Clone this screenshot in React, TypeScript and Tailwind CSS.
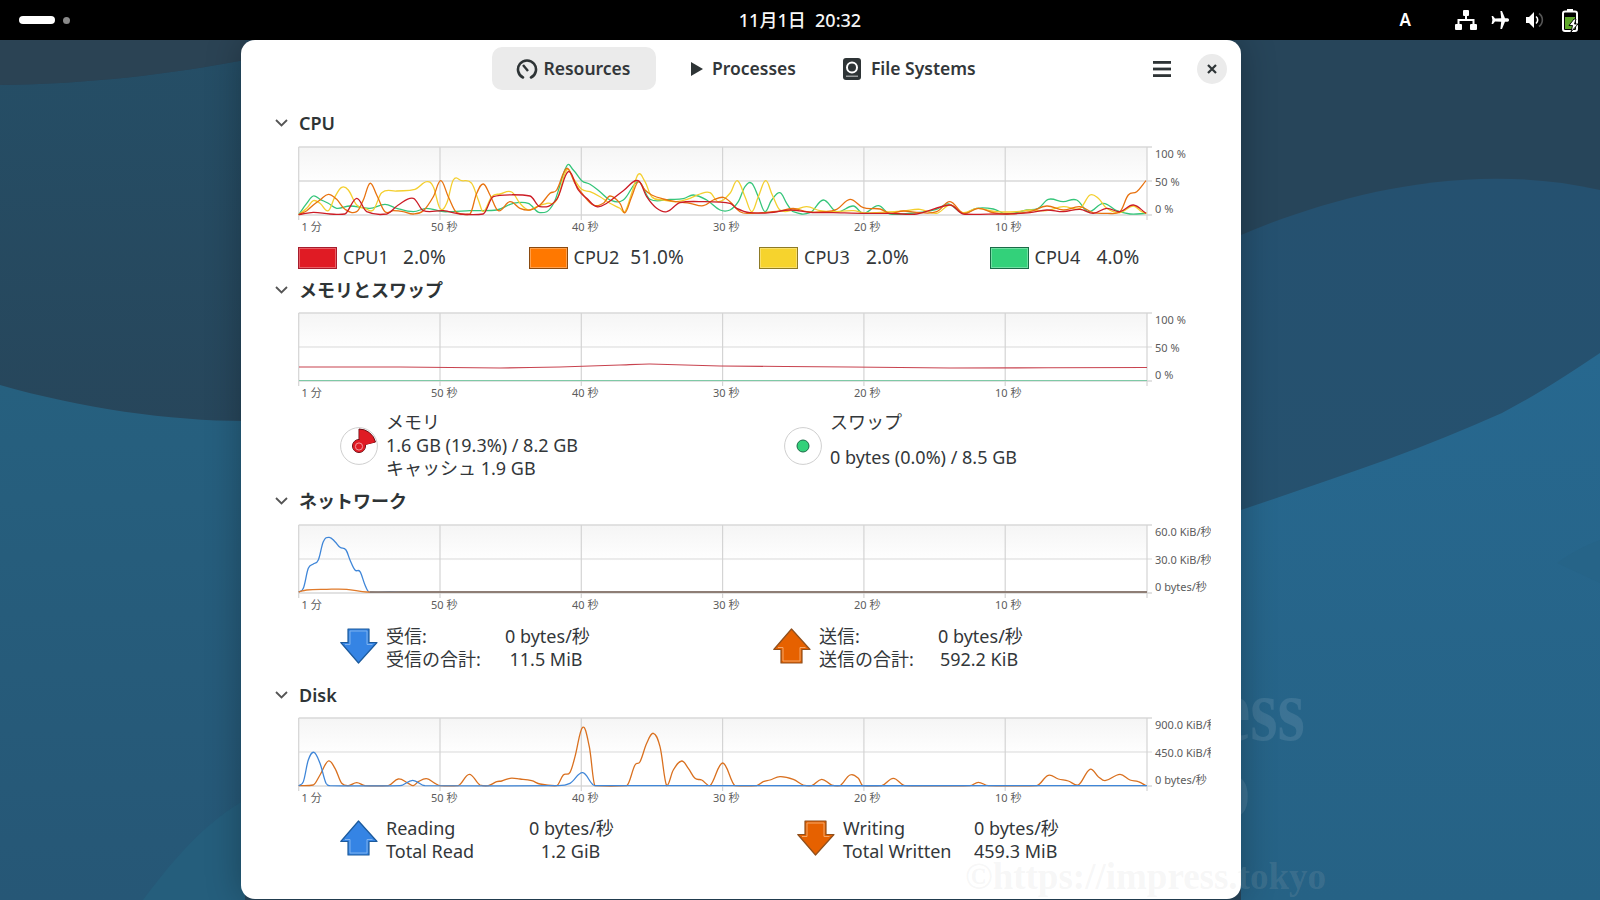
import React from "react";

type P = number[][];
const FONT = "font-['Noto_Sans','Noto_Sans_CJK_JP',sans-serif]";

const smooth = (pts: P, base: number) => {
  const slope = (i: number) => {
    const a = pts[Math.max(i - 1, 0)];
    const b = pts[Math.min(i + 1, pts.length - 1)];
    return (b[1] - a[1]) / Math.max(b[0] - a[0], 0.1);
  };
  let d = `M${pts[0][0].toFixed(1)} ${pts[0][1].toFixed(1)}`;
  for (let i = 0; i < pts.length - 1; i++) {
    const p1 = pts[i];
    const p2 = pts[i + 1];
    const h = Math.min((p2[0] - p1[0]) / 2.6, 7);
    const c1y = Math.min(base, p1[1] + slope(i) * h);
    const c2y = Math.min(base, p2[1] - slope(i + 1) * h);
    d += `C${(p1[0] + h).toFixed(1)} ${c1y.toFixed(1)} ${(p2[0] - h).toFixed(1)} ${c2y.toFixed(1)} ${p2[0].toFixed(1)} ${p2[1].toFixed(1)}`;
  }
  return d;
};

const zz = (bx: number, by: number, p: P): P => p.map(([x, y]) => [bx + x / 3, by + y / 3]);

const cpuYellow = [
  ...zz(270, 140, [[86,224],[110,205],[130,182],[150,190],[175,212],[195,170],[215,142],[235,150],[260,195],[285,205],[310,210],[335,158],[380,153],[435,148],[470,125],[490,140],[510,205],[530,190],[550,120],[575,122],[605,130],[625,180],[640,215],[665,170],[690,162],[725,156],[750,190],[775,210],[800,200],[830,190],[860,180],[890,90],[910,115],[935,148],[960,155],[990,170],[1020,190],[1050,205],[1065,215],[1085,160],[1105,103],[1125,125],[1145,170],[1180,180],[1220,185],[1260,175],[1290,162],[1320,158],[1345,185]]),
  ...zz(730, 140, [[0,160],[22,122],[45,170],[65,215],[85,170],[107,122],[127,165],[150,210],[190,210],[230,200],[270,212],[310,215],[370,212],[400,218],[440,218],[520,213],[570,208],[620,220],[660,195],[700,218],[740,205],[800,215],[860,215],[900,210],[950,212],[1000,200],[1050,205],[1080,165],[1105,175],[1130,205],[1170,218],[1210,198],[1235,215],[1250,220]]),
];
const cpuOrange = [
  ...zz(270, 140, [[86,224],[110,212],[130,195],[150,180],[175,163],[200,178],[225,208],[260,215],[280,180],[300,130],[320,165],[345,215],[370,212],[400,215],[430,222],[460,212],[490,170],[512,122],[535,170],[560,218],[600,222],[620,160],[640,132],[660,165],[685,212],[720,185],[750,205],[780,210],[810,195],[840,160],[860,150],[890,85],[915,130],[940,165],[970,195],[1000,190],[1020,168],[1050,190],[1065,218],[1085,170],[1105,125],[1125,150],[1145,165],[1180,177],[1220,185],[1260,190],[1300,197],[1330,180],[1360,172]]),
  ...zz(730, 140, [[0,185],[30,215],[60,220],[100,218],[150,213],[190,205],[230,215],[280,215],[320,208],[360,178],[400,203],[450,207],[480,220],[520,213],[570,218],[620,215],[660,185],[700,220],[745,205],[790,218],[830,222],[900,215],[950,198],[1000,210],[1050,200],[1090,218],[1130,220],[1170,215],[1195,165],[1220,155],[1248,122]]),
];
const cpuGreen = [
  ...zz(270, 140, [[86,224],[110,190],[130,168],[150,178],[175,190],[200,205],[240,198],[300,205],[345,193],[380,205],[430,215],[470,205],[520,215],[600,212],[680,210],[730,190],[775,190],[810,218],[850,192],[890,78],[910,90],[935,122],[960,133],[990,155],[1020,180],[1060,180],[1105,125],[1140,178],[1200,178],[1240,176],[1270,165],[1310,180],[1350,210]]),
  ...zz(730, 140, [[0,210],[25,185],[45,140],[65,130],[85,170],[105,215],[125,180],[150,158],[170,190],[190,215],[240,218],[280,180],[320,215],[370,198],[400,220],[445,197],[480,222],[560,218],[620,208],[655,192],[700,220],[740,205],[790,207],[830,222],[890,210],[925,205],[955,178],[1000,185],[1040,180],[1075,215],[1120,190],[1160,212],[1200,222],[1248,220]]),
];
const cpuRed = [
  ...zz(270, 140, [[86,224],[130,217],[180,222],[225,222],[260,175],[290,215],[350,222],[385,195],[430,175],[460,212],[520,212],[570,222],[640,222],[670,170],[780,168],[810,200],[860,178],[895,95],[925,150],[950,175],[980,200],[1010,190],[1060,152],[1105,122],[1130,170],[1160,205],[1190,215],[1230,188],[1300,185]]),
  ...zz(730, 140, [[0,190],[20,205],[60,218],[120,218],[180,210],[240,217],[310,218],[400,220],[480,220],[560,222],[660,195],[700,222],[800,222],[830,222],[900,218],[950,210],[1000,215],[1050,208],[1090,220],[1130,205],[1170,215],[1210,195],[1248,220]]),
];
const memRed: P = [[299,367],[400,367],[500,368],[560,367],[620,365],[650,364],[720,366],[850,367],[950,368],[1147,367.5]];
const memGreen: P = [[299,380.5],[1147,380.5]];
const netBlue = [
  ...zz(270, 500, [[86,276],[100,265],[115,205],[130,192],[145,180],[160,125],[178,112],[195,125],[210,142],[228,150],[240,180],[255,210],[270,215],[285,255],[297,276],[360,275],[400,276]]),
  [1147, 592],
];
const netOrange = [...zz(270, 500, [[86,276],[110,270],[170,268],[230,268],[290,276],[400,276]]), [1147, 592]];
const netGray: P = [[370, 592], [1147, 592]];
const diskBlue = [
  ...zz(270, 700, [[86,257],[100,245],[115,180],[132,157],[150,190],[168,250],[180,257],[390,257],[428,241],[465,257],[860,257],[900,250],[938,218],[975,257]]),
  [1147, 785.7],
];
const diskOrange = [
  ...zz(270, 700, [[86,257],[130,255],[150,225],[175,183],[195,205],[215,250],[235,257],[260,248],[285,257],[355,257],[385,237],[415,250],[430,257],[445,245],[470,236],[495,250],[510,257],[565,257],[598,223],[630,255],[655,257],[680,245],[695,243],[720,235],[750,237],[785,242],[810,252],[860,257],[880,225],[900,217],[915,170],[938,82],[958,140],[975,257],[1070,257],[1095,195],[1110,185],[1130,130],[1150,100],[1170,140],[1190,257],[1210,210],[1235,183],[1255,205],[1275,235],[1295,240],[1320,257],[1358,189],[1395,257]]),
  ...zz(740, 700, [[50,257],[70,245],[90,240],[120,230],[160,238],[190,255],[215,257],[245,238],[275,255],[300,257],[330,225],[355,235],[368,257],[425,257],[460,235],[495,257],[690,257],[715,247],[745,257],[890,257],[925,226],[955,237],[985,243],[1015,255],[1050,208],[1075,230],[1095,242],[1140,223],[1170,240],[1195,245],[1218,257]]),
];

const times = [
  { t: "1 分", x: 15.5 },
  { t: "50 秒", x: 145 },
  { t: "40 秒", x: 286 },
  { t: "30 秒", x: 427 },
  { t: "20 秒", x: 568 },
  { t: "10 秒", x: 709 },
];

function Chart({ id, top, series, labels, thin }: { id: string; top: number; series: { d: P; c: string; w?: number }[]; labels: string[]; thin?: boolean }) {
  const L = 12.7;
  const R = 861;
  const T = 7;
  const B = 75;
  const M = 41;
  const xs = [0, 1, 2, 3, 4, 5].map((i) => L + i * 141.3);
  return (
    <svg width={925} height={100} viewBox="0 0 925 100" className="block ml-[45px]">
      <defs>
        <linearGradient id={id} x1="0" y1="0" x2="0" y2="1">
          <stop offset="0" stopColor="#f5f5f5" />
          <stop offset="0.55" stopColor="#ffffff" />
        </linearGradient>
      </defs>
      <rect x={L} y={T} width={R - L} height={B - T} fill={`url(#${id})`} />
      {[T, M].map((y) => (
        <line key={y} x1={L} x2={R + 5} y1={y} y2={y} stroke="#d9d9d9" strokeWidth={y === M && thin ? 1 : 1.3} />
      ))}
      <line x1={L} x2={R + 5} y1={B} y2={B} stroke="#d9d9d9" strokeWidth={1.3} />
      {xs.map((x) => (
        <line key={x} x1={x} x2={x} y1={T} y2={B + 5} stroke="#d4d4d4" strokeWidth={1.2} />
      ))}
      <line x1={R} x2={R} y1={T} y2={B + 5} stroke="#d4d4d4" strokeWidth={1.2} />
      <g transform={`translate(-286,${-(top - 7)})`} fill="none" strokeLinejoin="round">
        {series.map((s, i) => (
          <path key={i} d={smooth(s.d, top + 68)} stroke={s.c} strokeWidth={s.w ?? 1.3} />
        ))}
      </g>
      <g className="text-[11px]" fill="#5c5c5c">
        {times.map((t) => (
          <text key={t.t} x={t.x} y={90.5}>{t.t}</text>
        ))}
        {labels.map((l, i) => (
          <text key={l} x={869} y={[17.5, 45.5, 73][i]}>{l}</text>
        ))}
      </g>
    </svg>
  );
}

function Title({ children }: { children: React.ReactNode }) {
  return (
    <div className="h-[26px] flex items-center pl-[34px] gap-[11px] font-semibold text-[18px] text-[#2e3436]">
      <svg width="13" height="8" viewBox="0 0 13 8" fill="none" stroke="#555" strokeWidth="1.8">
        <path d="M1 1l5.5 5.5L12 1" />
      </svg>
      <span>{children}</span>
    </div>
  );
}

function Arrow({ up, fill, stroke, light }: { up?: boolean; fill: string; stroke: string; light: string }) {
  return (
    <svg width="38" height="36" viewBox="0 0 38 36" className="shrink-0 mb-[4px]">
      <g transform={up ? "translate(0,36) scale(1,-1)" : ""}>
        <path d="M8 1H29V14.5H37L18.5 35L0.8 14.5H8Z" fill={fill} stroke={stroke} strokeWidth="1.2" strokeLinejoin="round" />
        <path d="M10 3H27V16.5H32.5" fill="none" stroke={light} strokeWidth="1" />
        <path d="M10 3V16.5H5" fill="none" stroke={light} strokeWidth="1" />
      </g>
    </svg>
  );
}

function Transfer({ ml, icon, l1, l2, v1, v2, labelW, valueW }: { ml: string; icon: React.ReactNode; l1: string; l2: string; v1: string; v2: string; labelW: string; valueW: string }) {
  return (
    <div className={`flex items-center ${ml}`}>
      {icon}
      <div className="ml-[8px] leading-[23px] whitespace-nowrap">
        <div className="flex">
          <span className={labelW}>{l1}</span>
          <span className={`${valueW} text-center`}>{v1}</span>
        </div>
        <div className="flex">
          <span className={labelW}>{l2}</span>
          <span className={`${valueW} text-center`}>{v2}</span>
        </div>
      </div>
    </div>
  );
}

const cpus = [
  { n: "CPU1", v: "2.0%", c: "bg-[#e01b24] border-[#a51d2d]", m: "ml-[11px]" },
  { n: "CPU2", v: "51.0%", c: "bg-[#ff7800] border-[#8a4a10]", m: "ml-[11px]" },
  { n: "CPU3", v: "2.0%", c: "bg-[#f6d32d] border-[#8d7a26]", m: "ml-[13px]" },
  { n: "CPU4", v: "4.0%", c: "bg-[#33d17a] border-[#1b6b47]", m: "ml-[13px]" },
];

export default function App() {
  return (
    <div className={`relative w-[1600px] h-[900px] overflow-hidden bg-[#27455a] ${FONT}`}>
      <svg className="absolute inset-0" width="1600" height="900" viewBox="0 0 1600 900">
        <defs>
          <linearGradient id="wl" x1="0" y1="0" x2="0" y2="1">
            <stop offset="0" stopColor="#26607f" />
            <stop offset="1" stopColor="#265776" />
          </linearGradient>
          <linearGradient id="wm" x1="0" y1="0" x2="0" y2="1">
            <stop offset="0" stopColor="#255170" />
            <stop offset="1" stopColor="#27516c" />
          </linearGradient>
          <linearGradient id="wt" x1="0" y1="0" x2="0" y2="1">
            <stop offset="0" stopColor="#254e66" />
            <stop offset="1" stopColor="#27465b" />
          </linearGradient>
          <linearGradient id="wr" x1="0" y1="0" x2="0" y2="1">
            <stop offset="0" stopColor="#27688f" />
            <stop offset="1" stopColor="#266285" />
          </linearGradient>
        </defs>
        <path d="M0 85C90 84 170 74 245 60V425H0Z" fill="url(#wt)" />
        <path d="M0 40H245V60C170 74 90 84 0 85Z" fill="#2b4354" />
        <path d="M0 385C80 408 170 421 245 421V900H0Z" fill="url(#wl)" />
        <path d="M143 900C180 850 210 820 245 800V900Z" fill="#255e7c" />
        <path d="M1241 235C1335 195 1468 160 1600 190V900H1241Z" fill="url(#wm)" />
        <path d="M1241 510C1335 478 1418 451 1502 413C1540 393 1570 373 1600 353V900H1241Z" fill="url(#wr)" />
        <path d="M1557 563C1572 552 1586 545 1600 540V583Z" fill="#266488" />
        <text x="1305" y="740" textAnchor="end" className="font-['Liberation_Serif',serif] font-bold text-[88px]" fill="#ffffff" fillOpacity="0.1" transform="translate(1305 740) scale(0.8 1) translate(-1305 -740)">Impress</text>
        <text x="1251" y="817" textAnchor="end" className="font-['Liberation_Serif',serif] font-bold text-[88px]" fill="#ffffff" fillOpacity="0.1">tokyo</text>
      </svg>

      <div className="relative h-10 bg-black grid grid-cols-3 items-center text-white">
        <div className="flex items-center pl-[19px] gap-[8px]">
          <div className="w-[36px] h-[8px] rounded-full bg-white" />
          <div className="w-[7px] h-[7px] rounded-full bg-[#8a8a8a]" />
        </div>
        <div className="text-center text-[18px] font-medium">11月1日&nbsp;&nbsp;20:32</div>
        <div className="flex items-center justify-end pr-[21px]">
          <span className="text-[17px] font-semibold mr-[44px]">A</span>
          <svg width="22" height="20" viewBox="0 0 22 20" fill="#fff" className="mr-[14px]">
            <rect x="8" y="0" width="6" height="6" rx="1" />
            <rect x="0" y="14" width="7" height="6" rx="1" />
            <rect x="15" y="14" width="7" height="6" rx="1" />
            <path d="M10 6h2v3h7.5v5h-2v-3H4.5v3h-2V9H10z" />
          </svg>
          <svg width="18" height="20" viewBox="0 0 18 20" fill="#fff" className="mr-[16px]">
            <path d="M9.4 1L11 1 14 8.3 16.5 8.3C17.4 8.3 18 9 18 10S17.4 11.7 16.5 11.7L14 11.7 11 19 9.4 19 10.2 11.7 4 11.5 2 14 .6 14 1.4 10 .6 6 2 6 4 8.5 10.2 8.3Z" />
          </svg>
          <svg width="20" height="20" viewBox="0 0 20 20" fill="#fff" className="mr-[17px]">
            <path d="M1 7h3L9 2v16l-5-5H1z" />
            <path d="M11 6.5a4.5 4.5 0 0 1 0 7" fill="none" stroke="#fff" strokeWidth="1.6" />
            <path d="M14 3.5a8 8 0 0 1 0 13" fill="none" stroke="#555" strokeWidth="1.6" />
          </svg>
          <svg width="17" height="23" viewBox="0 0 17 23">
            <rect x="5" y="0" width="6" height="3" fill="#fff" />
            <rect x="1" y="2.5" width="14" height="19.5" rx="2" fill="none" stroke="#fff" strokeWidth="2" />
            <rect x="3" y="8" width="10" height="12" fill="#5fa82a" />
            <path d="M12 10l-5 6.5h3.5L9 23l7-8h-3.5L14 10z" fill="#fff" stroke="#000" strokeWidth="0.9" />
          </svg>
        </div>
      </div>

      <div className="relative ml-[241px] w-[1000px] h-[859px] bg-white rounded-[14px] shadow-[0_0_35px_rgba(0,0,0,0.28)] text-[18px] text-[#33373a] overflow-hidden">
        <header className="h-[70px] flex items-start pt-[7px] font-semibold text-[17.5px] text-[#33373a]">
          <div className="ml-[251px] w-[164px] h-[43px] rounded-[10px] bg-[#ebebeb] flex items-center justify-center gap-[6px] pr-[2px]">
            <svg width="22" height="20" viewBox="0 0 22 20" fill="none" stroke="#2e3436" strokeWidth="2.6">
              <path d="M7 18.5A9 9 0 1 1 15 18.5" strokeLinecap="round" />
              <path d="M7 6l5 6" strokeWidth="2.4" />
            </svg>
            <span>Resources</span>
          </div>
          <div className="ml-[35px] h-[43px] flex items-center gap-[9px]">
            <svg width="12" height="14" viewBox="0 0 12 14" fill="#2e3436"><path d="M0 0l12 7-12 7z" /></svg>
            <span>Processes</span>
          </div>
          <div className="ml-[47px] h-[43px] flex items-center gap-[10px]">
            <svg width="18" height="22" viewBox="0 0 18 22">
              <rect x="0" y="0" width="18" height="22" rx="3" fill="#2e3436" />
              <circle cx="9" cy="9.5" r="5" fill="none" stroke="#fff" strokeWidth="2" />
              <rect x="3" y="17.5" width="12" height="1.5" fill="#fff" fillOpacity="0.5" />
            </svg>
            <span>File Systems</span>
          </div>
          <div className="ml-auto flex items-center">
            <div className="h-[43px] flex items-center mr-[26px]">
              <svg width="18" height="16" viewBox="0 0 18 16" fill="#2e3436">
                <rect width="18" height="2.8" />
                <rect y="6.6" width="18" height="2.8" />
                <rect y="13.2" width="18" height="2.8" />
              </svg>
            </div>
            <div className="w-[30px] h-[30px] rounded-full bg-[#ebebeb] flex items-center justify-center mr-[14px] mt-[7px] mb-[6px]">
              <svg width="10" height="10" viewBox="0 0 10 10" stroke="#2e3436" strokeWidth="2.2"><path d="M1 1l8 8M9 1l-8 8" /></svg>
            </div>
          </div>
        </header>

        <section className="h-[167px]">
          <Title>CPU</Title>
          <div className="mt-[4px]">
            <Chart id="g1" top={147} labels={["100 %", "50 %", "0 %"]} series={[
              { d: cpuGreen, c: "#35c57a" },
              { d: cpuYellow, c: "#f4cf2f" },
              { d: cpuOrange, c: "#e8720f" },
              { d: cpuRed, c: "#cc1c26" },
            ]} />
          </div>
          <div className="mt-[7px] ml-[57px] w-[922px] grid grid-cols-4">
            {cpus.map((c) => (
              <div key={c.n} className="flex items-center h-[22px]">
                <div className={`w-[39px] h-[22px] border ${c.c} shadow-[inset_0_0_0_1px_rgba(255,255,255,0.3)]`} />
                <span className="ml-[6px] pb-[2px]">{c.n}</span>
                <span className={`${c.m} min-w-[46px] text-right text-[19px] pb-[2px]`}>{c.v}</span>
              </div>
            ))}
          </div>
        </section>

        <section className="h-[211px]">
          <Title>メモリとスワップ</Title>
          <div className="mt-[3px]">
            <Chart id="g2" top={313} labels={["100 %", "50 %", "0 %"]} thin series={[
              { d: memGreen, c: "#7fc9a6", w: 1.2 },
              { d: memRed, c: "#c8434f", w: 1.1 },
            ]} />
          </div>
          <div className="mt-[5px] flex h-[69px]">
            <div className="ml-[99px] w-[444px] flex items-center">
              <svg width="38" height="38" viewBox="0 0 38 38" className="shrink-0">
                <circle cx="19" cy="19" r="18.4" fill="#fff" stroke="#cfcfcf" />
                <path d="M19 19V2A17 17 0 0 1 35.5 15Z" fill="#e01b24" stroke="#6b0f15" strokeWidth="1" />
                <circle cx="19" cy="19" r="6.5" fill="#e01b24" stroke="#6b0f15" strokeWidth="1" />
                <path d="M19.5 19.5V3A16 16 0 0 1 34.5 15.3Z" fill="#e01b24" />
                <circle cx="19" cy="19" r="6" fill="#e01b24" />
                <circle cx="19" cy="19.5" r="3.6" fill="none" stroke="#f39aa0" strokeWidth="1" />
              </svg>
              <div className="ml-[8px] leading-[23px]">
                <div>メモリ</div>
                <div>1.6 GB (19.3%) / 8.2 GB</div>
                <div>キャッシュ 1.9 GB</div>
              </div>
            </div>
            <div className="flex items-center">
              <svg width="38" height="38" viewBox="0 0 38 38" className="shrink-0">
                <circle cx="19" cy="19" r="18.4" fill="#fff" stroke="#cfcfcf" />
                <circle cx="19" cy="19" r="6" fill="#33d17a" stroke="#1b6b47" />
              </svg>
              <div className="ml-[8px] h-[69px] flex flex-col justify-between leading-[23px]">
                <div>スワップ</div>
                <div className="mb-[11px]">0 bytes (0.0%) / 8.5 GB</div>
              </div>
            </div>
          </div>
        </section>

        <section className="h-[194px]">
          <Title>ネットワーク</Title>
          <div className="mt-[4px]">
            <Chart id="g3" top={525} labels={["60.0 KiB/秒", "30.0 KiB/秒", "0 bytes/秒"]} thin series={[
              { d: netBlue, c: "#3f86d8" },
              { d: netOrange, c: "#e07a2a" },
              { d: netGray, c: "#7d7d80", w: 1.5 },
            ]} />
          </div>
          <div className="mt-[7px] flex">
            <Transfer ml="ml-[99px]" icon={<Arrow fill="#3584e4" stroke="#1c5a9c" light="#7fb2ee" />} l1="受信:" l2="受信の合計:" v1="0 bytes/秒" v2="11.5 MiB" labelW="w-[119px]" valueW="w-[82px]" />
            <Transfer ml="ml-[186px]" icon={<Arrow up fill="#e66100" stroke="#8f4f1c" light="#f4a768" />} l1="送信:" l2="送信の合計:" v1="0 bytes/秒" v2="592.2 KiB" labelW="w-[119px]" valueW="w-[82px]" />
          </div>
        </section>

        <section>
          <Title>Disk</Title>
          <div className="mt-[3px]">
            <Chart id="g4" top={718} labels={["900.0 KiB/秒", "450.0 KiB/秒", "0 bytes/秒"]} thin series={[
              { d: diskOrange, c: "#d9701f" },
              { d: diskBlue, c: "#3f86d8" },
            ]} />
          </div>
          <div className="mt-[6px] flex">
            <Transfer ml="ml-[99px]" icon={<Arrow up fill="#3584e4" stroke="#1c5a9c" light="#7fb2ee" />} l1="Reading" l2="Total Read" v1="0 bytes/秒" v2="1.2 GiB" labelW="w-[143px]" valueW="w-[83px]" />
            <Transfer ml="ml-[185px]" icon={<Arrow fill="#e66100" stroke="#8f4f1c" light="#f4a768" />} l1="Writing" l2="Total Written" v1="0 bytes/秒" v2="459.3 MiB" labelW="w-[131px]" valueW="w-[83px]" />
          </div>
        </section>
      </div>

      <div className="absolute left-[965px] top-[849px] text-[37px] font-bold font-['Liberation_Serif',serif] text-[#c0c0c0]/15 whitespace-nowrap pointer-events-none">
        ©https://impress.tokyo
      </div>
    </div>
  );
}
